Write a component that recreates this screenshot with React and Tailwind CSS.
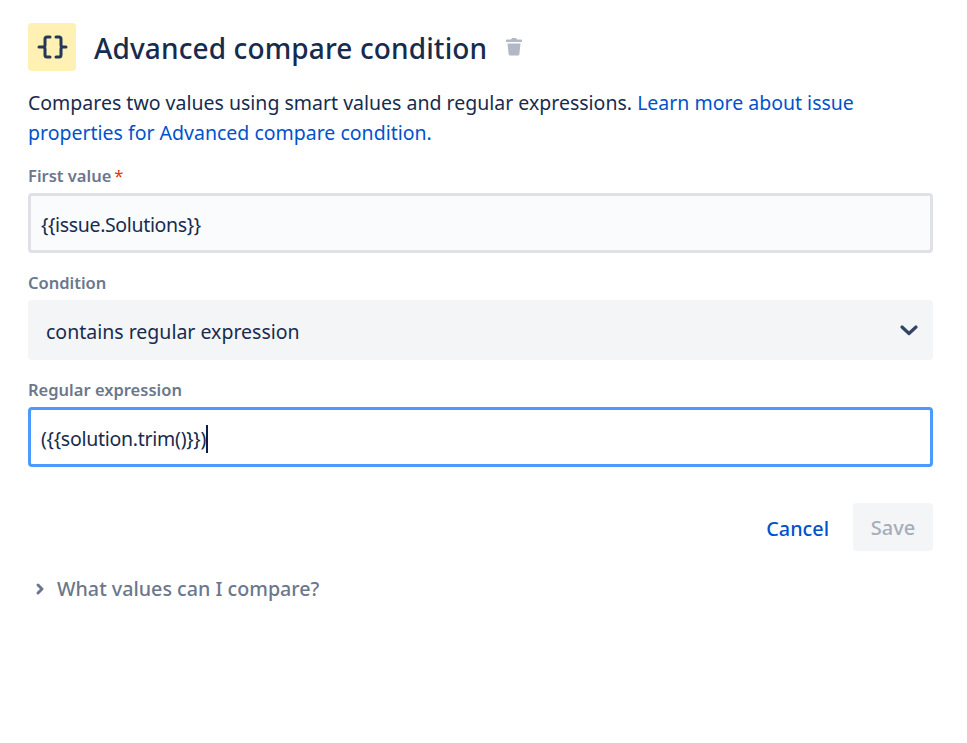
export default function App() {
  return (
    <div className="min-h-[743px] bg-white text-[#172b4d] font-['Noto_Sans','Open_Sans',sans-serif] pt-[23px] pl-[28px] pr-[34px]">
      <div className="flex items-center h-[48px]">
        <div className="w-[48px] h-[48px] rounded-[4px] bg-[#fff0b3] flex items-center justify-center">
          <svg width="32" height="32" viewBox="0 0 32 32" fill="none" stroke="#253858" strokeWidth="3" strokeLinecap="round" strokeLinejoin="round">
            <path d="M14 6h-3a2 2 0 0 0-2 2v6a2 2 0 0 1-2 2H3h4a2 2 0 0 1 2 2v6a2 2 0 0 0 2 2h3" />
            <path d="M20 6h3a2 2 0 0 1 2 2v6a2 2 0 0 0 2 2h3-3a2 2 0 0 0-2 2v6a2 2 0 0 1-2 2h-3" />
          </svg>
        </div>
        <h1 className="ml-[18px] mt-[2px] text-[28px] leading-[48px] font-medium tracking-[0.12px] text-[#172b4d] whitespace-nowrap">Advanced compare condition</h1>
        <svg className="ml-[17px]" width="20" height="20" viewBox="0 0 20 20" fill="#b3b9c4">
          <path d="M8 1h4l1 1.5h4.2a.8.8 0 0 1 .8.8V5H2V3.3a.8.8 0 0 1 .8-.8H7z" />
          <path d="M3.5 6.5h13L15.4 17a1.6 1.6 0 0 1-1.6 1.5H6.2A1.6 1.6 0 0 1 4.6 17z" />
        </svg>
      </div>
      <p className="mt-[17px] text-[19.5px] leading-[30px]">
        Compares two values using smart values and regular expressions.{" "}
        <a className="text-[#0052cc]">Learn more about issue properties for Advanced compare condition.</a>
      </p>
      <label className="block mt-[16px] text-[16.5px] leading-[24px] font-semibold text-[#6b778c]">First value<span className="text-[#de350b] ml-[3px] font-normal">*</span></label>
      <div className="mt-[5px] h-[60px] rounded-[4px] border-[3px] border-[#dfe1e6] bg-[#fafbfc] flex items-center pl-[10px] pt-[3px] text-[19.5px] tracking-[-0.35px]">{"{{issue.Solutions}}"}</div>
      <label className="block mt-[18px] text-[16.5px] leading-[24px] font-semibold text-[#6b778c]">Condition</label>
      <div className="mt-[5px] h-[60px] rounded-[4px] bg-[#f4f5f7] flex items-center justify-between pl-[18px] pr-[12px] pt-[3px] text-[19.5px]">
        <span>contains regular expression</span>
        <svg className="-mt-[3px]" width="24" height="24" viewBox="0 0 24 24" fill="none" stroke="#344563" strokeWidth="3.2" strokeLinecap="round" strokeLinejoin="round"><path d="M5 9l7 6.5L19 9" /></svg>
      </div>
      <label className="block mt-[18px] text-[16.5px] leading-[24px] font-semibold text-[#6b778c]">Regular expression</label>
      <div className="mt-[5px] h-[60px] rounded-[4px] border-[3px] border-[#4c9aff] bg-white flex items-center pl-[10px] pt-[3px] text-[19.5px] tracking-[-0.27px]">
        <span>{"({{solution.trim()}})"}</span><span className="w-[2px] h-[28px] bg-[#091e42]" />
      </div>
      <div className="mt-[36px] flex justify-end items-center">
        <span className="mt-[3px] text-[19.8px] font-medium text-[#0052cc] mr-[24px]">Cancel</span>
        <div className="w-[80px] h-[48px] rounded-[4px] bg-[#f4f5f7] flex items-center justify-center pt-[2px] text-[20px] font-medium text-[#a5adba]">Save</div>
      </div>
      <div className="mt-[23px] flex items-center">
        <svg className="ml-[2px]" width="20" height="20" viewBox="0 0 20 20" fill="none" stroke="#6b778c" strokeWidth="3" strokeLinecap="round" strokeLinejoin="round"><path d="M8 6l4 4-4 4" /></svg>
        <span className="ml-[7px] text-[19.7px] font-medium text-[#6b778c]">What values can I compare?</span>
      </div>
    </div>
  );
}
